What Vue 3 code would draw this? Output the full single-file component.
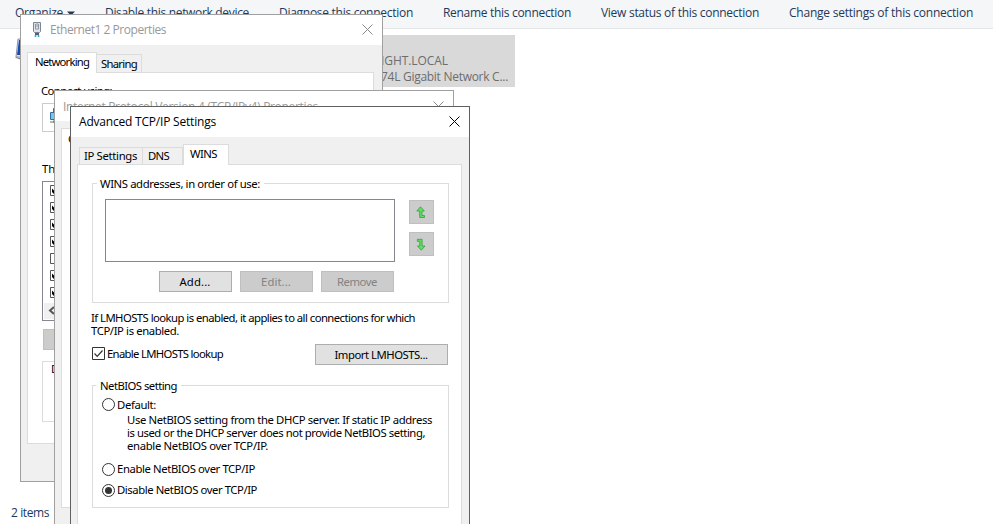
<script setup>
// Tunes letter spacing so a label occupies the given width in pixels
const vFit = {
  mounted(el, { value }) {
    el.style.letterSpacing = '0px'
    const natural = el.getBoundingClientRect().width
    el.style.letterSpacing = (value - natural) / el.textContent.length + 'px'
  }
}
const commands = [
  { text: 'Disable this network device', w: 144 },
  { text: 'Diagnose this connection', w: 134 },
  { text: 'Rename this connection', w: 128 },
  { text: 'View status of this connection', w: 158 },
  { text: 'Change settings of this connection', w: 184 }
]
const items = [true, true, true, true, false, true, true]
const help = [
  { text: 'Use NetBIOS setting from the DHCP server. If static IP address', w: 305 },
  { text: 'is used or the DHCP server does not provide NetBIOS setting,', w: 298 },
  { text: 'enable NetBIOS over TCP/IP.', w: 141 }
]
</script>

<template>
  <div class="desktop">
    <header class="toolbar">
      <span class="organize"><span v-fit="48" class="t">Organize</span></span>
      <svg class="caret" width="8" height="5" viewBox="0 0 8 5"><path d="M0 .5h8L4 4.8z" fill="#1e395b" /></svg>
      <nav class="commands">
        <span v-for="c in commands" :key="c.text" v-fit="c.w" class="t">{{ c.text }}</span>
      </nav>
    </header>
    <main class="folder">
      <svg class="adapter" width="10" height="24" viewBox="0 0 10 24">
        <path d="M3 1h7v18H1z" fill="#dfe3ea" stroke="#8994a7" />
        <path d="M4 2h6v15H2z" fill="#1648b8" /><path d="M6 3h4v5z" fill="#4c8bea" />
        <path d="M0 19l10 2v2l-9-3z" fill="#777" />
      </svg>
      <div class="tile">
        <span v-fit="67" class="t">IGHT.LOCAL</span>
        <span v-fit="127" class="t">74L Gigabit Network C...</span>
      </div>
    </main>
    <footer class="status"><span v-fit="38" class="t">2 items</span></footer>

    <section class="window ethernet">
      <div class="title">
        <svg class="plug" width="10" height="17" viewBox="0 0 10 17">
          <path d="M1.5 1.5h7v9l-1 1h-5l-1-1z" fill="#dfe3ea" stroke="#7c8694" />
          <path d="M3.5 3v5h3V3M5 1v5" fill="none" stroke="#9098a4" />
          <path d="M3 12h4v2H3z" fill="#53616e" /><path d="M3.5 14v2M6.5 14v2" stroke="#2daae0" stroke-width="1.6" />
        </svg>
        <span v-fit="116" class="t">Ethernet1 2 Properties</span>
        <svg class="close" width="11" height="11" viewBox="0 0 11 11"><path d="M.5.5l10 10M10.5.5l-10 10" /></svg>
      </div>
      <div class="tabs">
        <div class="tab active networking"><span v-fit="54" class="t">Networking</span></div>
        <div class="tab sharing"><span v-fit="36" class="t">Sharing</span></div>
      </div>
      <div class="page">
        <span v-fit="71" class="t">Connect using:</span>
        <div class="device">
          <svg width="12" height="16" viewBox="0 0 12 16">
            <path d="M3.5 .5h9v9h-9z" fill="#6dc8f5" stroke="#356d9b" /><path d="M.5 4.5h9v7h-9z" fill="#6dc8f5" stroke="#356d9b" />
            <path d="M0 13h12v2H0z" fill="#b4bcb8" /><path d="M3 12.5h4v2.5H3z" fill="#35b44a" />
          </svg>
        </div>
        <span class="t this">This</span>
        <div class="list">
          <div v-for="(on, i) in items" :key="i" class="check-row">
            <svg width="11" height="11" viewBox="0 0 11 11">
              <path d="M.5.5h10v10H.5z" fill="#fff" stroke="#555" /><path v-if="on" d="M2 3.6v3.4L5 10 9 5.500V2.200L5 6.600z" fill="#000" />
            </svg>
          </div>
          <div class="scroll">
            <svg width="8" height="9" viewBox="0 0 8 9"><path d="M6 1L2 4.5 6 8" fill="none" stroke="#555" stroke-width="2" /></svg>
          </div>
        </div>
        <div class="install"></div>
        <div class="description"><span class="t legend">Description</span></div>
      </div>
    </section>

    <section class="window protocol">
      <div class="title">
        <span v-fit="255" class="t">Internet Protocol Version 4 (TCP/IPv4) Properties</span>
        <svg class="close" width="11" height="11" viewBox="0 0 11 11"><path d="M.5.5l10 10M10.5.5l-10 10" /></svg>
      </div>
      <div class="page"><span class="t">General</span></div>
    </section>

    <section class="window advanced">
      <div class="title">
        <span v-fit="137" class="t">Advanced TCP/IP Settings</span>
        <svg class="close" width="11" height="11" viewBox="0 0 11 11"><path d="M.5.5l10 10M10.5.5l-10 10" /></svg>
      </div>
      <div class="tabs">
        <div class="tab ip"><span v-fit="53" class="t">IP Settings</span></div>
        <div class="tab dns"><span v-fit="21" class="t">DNS</span></div>
        <div class="tab active wins"><span v-fit="27" class="t">WINS</span></div>
      </div>
      <div class="page">
        <div class="group addresses">
          <div class="legend"><span v-fit="160" class="t">WINS addresses, in order of use:</span></div>
          <div class="order">
            <div class="listbox"></div>
            <div class="arrows">
              <div class="btn disabled arrow">
                <svg width="10" height="13" viewBox="0 0 10 13"><path d="M4.5.8L8.300 5H6v4.500h2.500v2H3.700V5H.8z" /></svg>
              </div>
              <div class="btn disabled arrow">
                <svg width="10" height="13" viewBox="0 0 10 13"><path d="M5.300 12.200L1.500 8h2.300V3.300H1.300v-2h4.800V8H9z" /></svg>
              </div>
            </div>
          </div>
          <div class="actions">
            <div class="btn"><span v-fit="31" class="t">Add...</span></div>
            <div class="btn disabled"><span v-fit="30" class="t">Edit...</span></div>
            <div class="btn disabled"><span v-fit="40" class="t">Remove</span></div>
          </div>
        </div>
        <div class="note">
          <span v-fit="324" class="t">If LMHOSTS lookup is enabled, it applies to all connections for which</span>
          <span v-fit="88" class="t">TCP/IP is enabled.</span>
        </div>
        <div class="lookup">
          <svg width="13" height="13" viewBox="0 0 13 13">
            <path d="M.5.5h12v12H.5z" fill="#fff" stroke="#333" /><path d="M2.5 6.5l2.7 2.8 5.3-5.8" fill="none" stroke="#333" stroke-width="1.2" />
          </svg>
          <span v-fit="116" class="t">Enable LMHOSTS lookup</span>
          <div class="btn import"><span v-fit="93" class="t">Import LMHOSTS...</span></div>
        </div>
        <div class="group netbios">
          <div class="legend"><span v-fit="77" class="t">NetBIOS setting</span></div>
          <div class="radio first"><i></i><span v-fit="39" class="t">Default:</span></div>
          <div class="help"><span v-for="h in help" :key="h.text" v-fit="h.w" class="t">{{ h.text }}</span></div>
          <div class="radio"><i></i><span v-fit="138" class="t">Enable NetBIOS over TCP/IP</span></div>
          <div class="radio last"><i class="on"></i><span v-fit="140" class="t">Disable NetBIOS over TCP/IP</span></div>
        </div>
      </div>
    </section>
  </div>
</template>

<style>
body { margin: 0; background: #fff; overflow: hidden; }
</style>

<style scoped>
* { box-sizing: border-box; }
svg { display: block; flex: none; }
.desktop { position: relative; width: 993px; height: 524px; overflow: hidden; display: flex; flex-direction: column; background: #fff; color: #1e395b; font: 12px/16px "Open Sans", sans-serif; }
.t { display: inline-block; white-space: nowrap; flex: none; }
.toolbar { height: 29px; flex: none; display: flex; align-items: flex-start; padding: 5px 0 0 15px; background: #f5f6f7; border-bottom: 1px solid #e4e5e6; }
.organize { width: 52px; }
.caret { margin-top: 6px; }
.commands { display: flex; gap: 30px; padding-left: 30px; }
.folder { flex: 1; display: flex; align-items: flex-start; padding: 6px 0 0 15px; }
.adapter { margin-top: 3px; }
.tile { width: 134px; height: 52px; margin-left: 356px; padding: 18px 0 0 0; background: #d9d9d9; color: #6d6d6d; display: flex; flex-direction: column; align-items: flex-start; }
.status { height: 19px; padding-left: 11px; }
.window { position: absolute; border: 1px solid #a0a0a0; background: #f0f0f0; font: 11.3px/14px "Noto Sans", sans-serif; color: #000; display: flex; flex-direction: column; }
.title { height: 30px; flex: none; display: flex; align-items: flex-start; padding: 7px 9px 0 8px; background: #fff; font: 12px/16px "Open Sans", sans-serif; color: #999; }
.close { margin: 2px 0 0 auto; stroke: #888; fill: none; }
.tabs { display: flex; align-items: flex-end; flex: none; position: relative; z-index: 1; margin-bottom: -1px; }
.tab { height: 18px; border: 1px solid #dcdcdc; border-left: 0; background: #f0f0f0; }
.tab.active { border: 1px solid #dcdcdc; border-bottom: 0; background: #fff; height: 21px; }
.page { background: #fff; border: 1px solid #dcdcdc; display: flex; flex-direction: column; align-items: flex-start; }

.ethernet { left: 20px; top: 14px; width: 363px; height: 468px; }
.plug { margin: -1px 8px 0 2px; }
.ethernet .title { padding-left: 9px; }
.ethernet .tabs { padding: 7px 0 0 6px; }
.networking { width: 70px; padding: 2px 0 0 7px; }
.sharing { width: 45px; height: 19px; padding: 2px 0 0 4px; }
.ethernet .page { width: 347px; height: 372px; margin-left: 6px; padding: 11px 0 0 14px; }
.ethernet .page > .t:first-child { margin-left: -1px; }
.device { width: 310px; height: 29px; margin-top: 5px; border: 1px solid #ccc; padding: 4px 0 0 7px; }
.this { margin: 30px 0 0 0; }
.list { width: 310px; height: 140px; margin-top: 5px; border: 1px solid #828790; padding-top: 3px; }
.check-row { height: 17px; padding-left: 7px; }
.scroll { height: 16px; margin: -1px 2px 0 1px; padding: 3px 0 0 4px; background: #f0f0f0; }
.install { width: 90px; height: 21px; margin: 8px 0 0 1px; background: #ccc; border: 1px solid #bfbfbf; }
.description { width: 310px; height: 61px; margin-top: 11px; border: 1px solid #dcdcdc; }
.description .legend { margin: -7px 0 0 6px; padding: 0 2px; background: #fff; }

.protocol { left: 54px; top: 90px; width: 400px; height: 450px; }
.protocol .title { padding-top: 8px; }
.protocol .page { width: 384px; height: 380px; margin: 7px 0 0 6px; padding: 3px 0 0 6px; }

.advanced { left: 70px; top: 106px; width: 400px; height: 450px; border-color: #606060; }
.advanced .title { color: #000; }
.advanced .close { stroke: #000; }
.advanced .tabs { padding: 7px 0 0 8px; }
.ip { width: 64px; padding: 1px 0 0 4px; border-left: 1px solid #dcdcdc; }
.dns { width: 40px; padding: 1px 0 0 5px; }
.wins { width: 46px; padding: 2px 0 0 6px; }
.advanced .page { width: 385px; height: 370px; margin-left: 6px; padding: 18px 0 0 14px; }
.group { width: 357px; border: 1px solid #dcdcdc; display: flex; flex-direction: column; align-items: flex-start; }
.group .legend { display: flex; margin: -7px 0 0 4px; padding: 0 4px 0 3px; background: #fff; }
.addresses { height: 120px; }
.order { display: flex; gap: 14px; margin: 8px 0 0 12px; }
.listbox { width: 290px; height: 63px; border: 1px solid #828790; }
.arrows { display: flex; flex-direction: column; gap: 8px; padding-top: 1px; }
.btn { width: 73px; height: 21px; display: flex; justify-content: center; padding: 3px 1px 0 0; border: 1px solid #adadad; background: #e1e1e1; }
.btn.disabled { background: #ccc; border-color: #bfbfbf; color: #838383; }
.btn.arrow { width: 25px; height: 24px; padding-top: 5px; }
.arrow path { fill: #62df62; stroke: #3fa34c; stroke-width: .9; }
.actions { display: flex; gap: 8px; margin: 9px 0 0 66px; }
.note { display: flex; flex-direction: column; align-items: flex-start; margin: 8px 0 0 -1px; line-height: 13px; }
.lookup { display: flex; align-items: flex-start; width: 356px; height: 21px; margin-top: 7px; }
.lookup > svg { margin: 3px 2px 0 0; }
.lookup > .t { margin-top: 3px; }
.btn.import { width: 133px; margin-left: auto; }
.netbios { height: 123px; margin-top: 20px; }
.netbios .legend { padding: 0 4px; margin-left: 3px; }
.radio { display: flex; align-items: center; gap: 2px; height: 14px; margin: 10px 0 0 9px; }
.radio i { width: 13px; height: 13px; border: 1px solid #333; border-radius: 50%; background: #fff; padding: 2px; }
.radio i.on::before { content: ""; display: block; width: 7px; height: 7px; border-radius: 50%; background: #333; }
.radio.first { margin-top: 4px; }
.radio.first .t { padding-top: 1px; }
.help { display: flex; flex-direction: column; align-items: flex-start; margin: 2px 0 0 34px; line-height: 13px; }
.radio.last { margin-top: 7px; }
</style>
